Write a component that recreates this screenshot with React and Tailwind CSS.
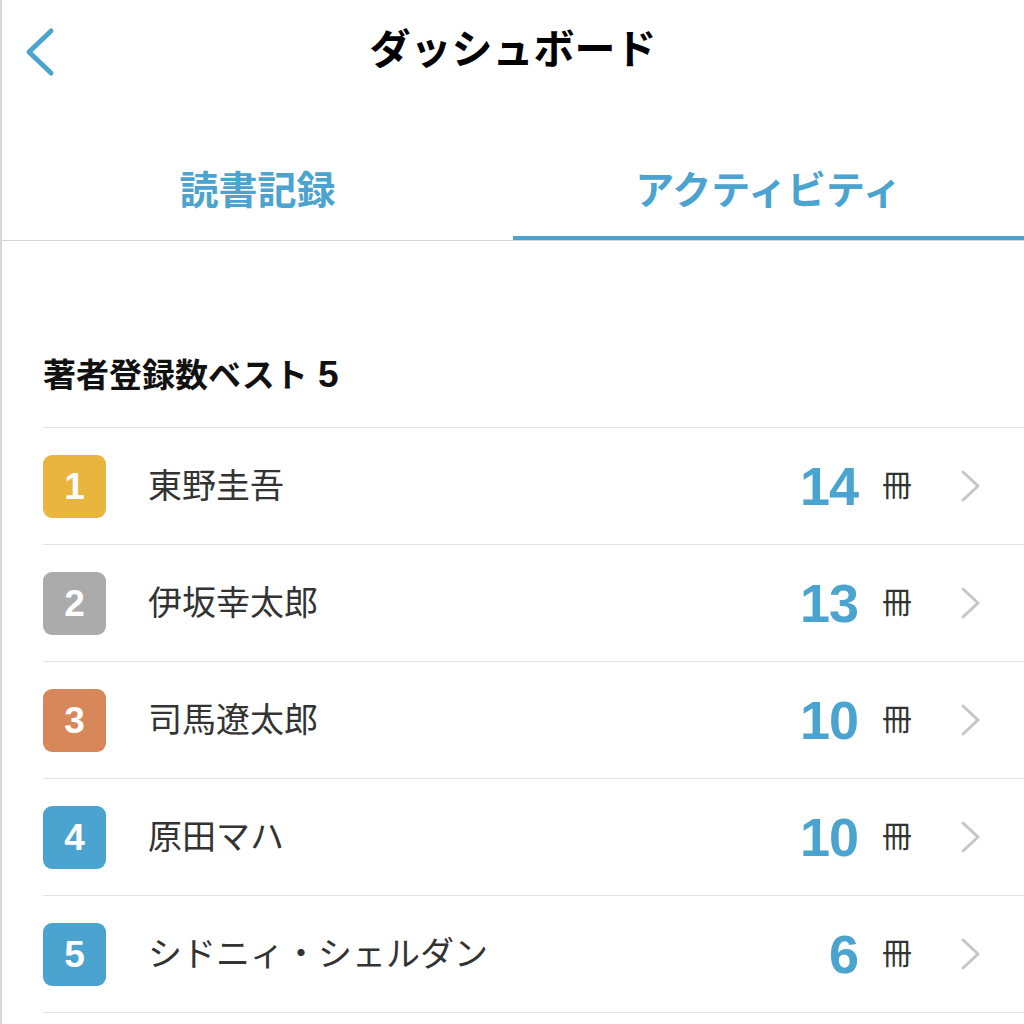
import React from "react";

const BLUE = "#4ba4cf";

const AUTHORS = [
  { rank: 1, name: "東野圭吾", count: 14, badge: "bg-[#e9b53f]" },
  { rank: 2, name: "伊坂幸太郎", count: 13, badge: "bg-[#ababab]" },
  { rank: 3, name: "司馬遼太郎", count: 10, badge: "bg-[#d8875a]" },
  { rank: 4, name: "原田マハ", count: 10, badge: "bg-[#4ba4cf]" },
  { rank: 5, name: "シドニィ・シェルダン", count: 6, badge: "bg-[#4ba4cf]" },
];

function BackIcon() {
  return (
    <svg width="40" height="60" viewBox="0 0 40 60" fill="none">
      <polyline
        points="32,11 10,32 32,53"
        stroke={BLUE}
        strokeWidth="5"
        strokeLinecap="round"
        strokeLinejoin="round"
      />
    </svg>
  );
}

function ChevronRight() {
  return (
    <svg width="22" height="34" viewBox="0 0 22 34" fill="none">
      <polyline
        points="3,3 18,17 3,31"
        stroke="#c6c6c6"
        strokeWidth="3"
        strokeLinecap="round"
        strokeLinejoin="round"
      />
    </svg>
  );
}

function AuthorRow({ author }) {
  return (
    <div className="flex items-center h-[117px] border-t border-[#e3e3e3]">
      <div
        className={`w-[63px] h-[63px] rounded-[9px] flex items-center justify-center text-white text-[37px] font-bold leading-none ${author.badge}`}
      >
        {author.rank}
      </div>
      <div className="ml-[42px] flex-1 text-[34px] text-[#333333] leading-none">{author.name}</div>
      <div className="text-[54px] font-bold leading-none text-[#4ba4cf] tracking-[-1px]">{author.count}</div>
      <div className="ml-[24px] text-[30px] text-[#333333] leading-none">冊</div>
      <div className="ml-[48px] mr-[42px] flex items-center">
        <ChevronRight />
      </div>
    </div>
  );
}

export default function App() {
  return (
    <div className="w-[1024px] h-[1024px] overflow-hidden bg-white border-l-2 border-[#d6d6d6] font-['Liberation_Sans','Noto_Sans_CJK_JP',sans-serif]">
      {/* Header */}
      <header className="grid grid-cols-[1fr_auto_1fr] items-center h-[100px]">
        <div className="pl-[17px] flex items-center">
          <BackIcon />
        </div>
        <h1 className="text-[41px] font-bold text-black leading-none">ダッシュボード</h1>
        <div />
      </header>

      {/* Tabs */}
      <div className="flex h-[141px] border-b border-[#d4d4d4]">
        <div className="flex-1 flex items-end justify-center pb-[26px] border-b-4 border-transparent">
          <span className="text-[39px] font-bold leading-none text-[#4ba4cf]">読書記録</span>
        </div>
        <div className="flex-1 flex items-end justify-center pb-[26px] border-b-4 border-[#4ba4cf]">
          <span className="text-[39px] font-bold leading-none text-[#4ba4cf]">アクティビティ</span>
        </div>
      </div>

      {/* Ranking */}
      <section className="pl-[41px] pt-[115px]">
        <h2 className="text-[33px] font-bold text-[#111111] leading-none mb-[34px]">
          著者登録数ベスト<span className="text-[37px]"> 5</span>
        </h2>
        <div className="border-b border-[#e3e3e3]">
          {AUTHORS.map((a) => (
            <AuthorRow key={a.rank} author={a} />
          ))}
        </div>
      </section>
    </div>
  );
}
